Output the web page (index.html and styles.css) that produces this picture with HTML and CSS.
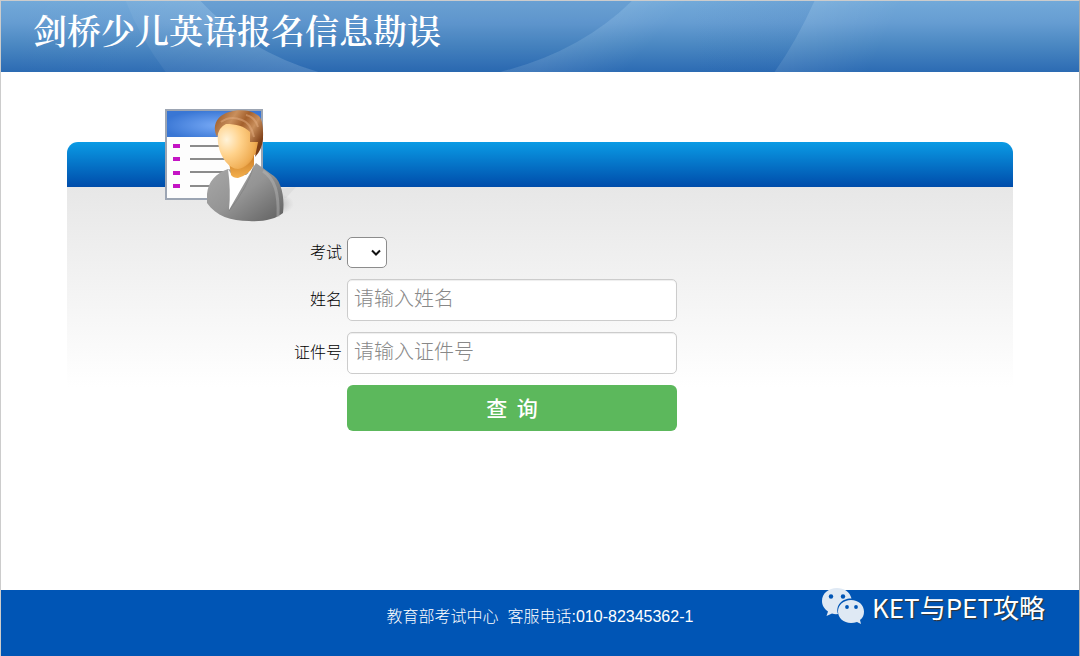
FILE: index.html
```html
<!DOCTYPE html>
<html lang="zh-CN">
<head>
	<meta charset="UTF-8">
	<title>剑桥少儿英语报名信息勘误</title>
	<link rel="stylesheet" href="styles.css">
</head>
<body>
	<div class="header">
		<svg class="wave" viewBox="0 0 1080 71" preserveAspectRatio="none" aria-hidden="true">
			<defs>
				<linearGradient id="w1" x1="0" x2="1"><stop offset="0" stop-color="#fff" stop-opacity="0"/><stop offset="1" stop-color="#fff" stop-opacity=".02"/></linearGradient>
				<linearGradient id="w2" gradientUnits="userSpaceOnUse" x1="125" y1="0" x2="300" y2="0"><stop offset="0" stop-color="#fff" stop-opacity=".06"/><stop offset=".6" stop-color="#fff" stop-opacity=".1"/><stop offset="1" stop-color="#fff" stop-opacity=".13"/></linearGradient>
				<linearGradient id="w3" gradientUnits="userSpaceOnUse" x1="575" y1="25" x2="625" y2="71"><stop offset="0" stop-color="#fff" stop-opacity=".1"/><stop offset="1" stop-color="#fff" stop-opacity="0"/></linearGradient>
				<linearGradient id="w4" gradientUnits="userSpaceOnUse" x1="795" y1="35" x2="870" y2="71"><stop offset="0" stop-color="#fff" stop-opacity=".09"/><stop offset="1" stop-color="#fff" stop-opacity="0"/></linearGradient>
				<linearGradient id="w5" x1="0" x2="1"><stop offset="0" stop-color="#1b4c9c" stop-opacity="0"/><stop offset="1" stop-color="#1b4c9c" stop-opacity=".07"/></linearGradient>
			</defs>
			<path d="M0 0H125Q140 38 165 71H0Z" fill="url(#w1)"/>
			<path d="M125 0H200Q245 49 318 71H165Q140 38 125 0Z" fill="url(#w2)"/>
			<path d="M200 0H632Q580 51 500 71H318Q245 49 200 0Z" fill="#1b4c9c" fill-opacity=".09"/>
			<path d="M632 0H760L700 71H500Q580 51 632 0Z" fill="url(#w3)"/>
			<path d="M690 0H815Q797 40 775 71H690Z" fill="url(#w5)"/>
			<path d="M815 0H960V71H775Q797 40 815 0Z" fill="url(#w4)"/>
		</svg>
		<h1>剑桥少儿英语报名信息勘误</h1>
	</div>
	<div class="main">
		<div class="panel">
			<div class="panel-top"></div>
			<svg class="user-icon" width="132" height="118" viewBox="0 0 132 118" aria-hidden="true">
				<defs>
					<radialGradient id="top" cx=".55" cy=".55" r=".6"><stop offset="0" stop-color="#78aaf6"/><stop offset="1" stop-color="#3976d4"/></radialGradient>
					<radialGradient id="face" cx=".22" cy=".38" r=".85"><stop offset="0" stop-color="#fff3d9"/><stop offset=".4" stop-color="#ffd28b"/><stop offset=".8" stop-color="#f0ae55"/><stop offset="1" stop-color="#d98b30"/></radialGradient>
					<linearGradient id="hair" x1="0" y1="0" x2="1" y2=".6"><stop offset="0" stop-color="#8f4f20"/><stop offset=".35" stop-color="#c98f5c"/><stop offset=".55" stop-color="#a4602c"/><stop offset=".75" stop-color="#c98f5c"/><stop offset="1" stop-color="#7c3d15"/></linearGradient>
					<linearGradient id="coat" x1="0" y1="0" x2="1" y2="1"><stop offset="0" stop-color="#aaa"/><stop offset=".5" stop-color="#949494"/><stop offset="1" stop-color="#5f5f5f"/></linearGradient>
					<linearGradient id="neck" x1="0" y1="0" x2="0" y2="1"><stop offset="0" stop-color="#c47420"/><stop offset="1" stop-color="#f4b04d"/></linearGradient>
					<radialGradient id="shade"><stop offset="0" stop-color="#777" stop-opacity=".7"/><stop offset="1" stop-color="#999" stop-opacity="0"/></radialGradient>
				</defs>
				<ellipse cx="106" cy="99" rx="24" ry="12" fill="url(#shade)"/>
				<path d="M98 86L132 82L122 93L98 95Z" fill="#999" fill-opacity=".12"/>
				<rect x="2" y="5" width="96" height="89" fill="#fdfdfd" stroke="#9ca5b3" stroke-width="2"/>
				<rect x="3" y="6" width="94" height="26" fill="url(#top)"/>
				<g fill="#c414c4"><rect x="9" y="39" width="7" height="4"/><rect x="9" y="52" width="7" height="4"/><rect x="9" y="66" width="7" height="4"/><rect x="9" y="79" width="7" height="4"/></g>
				<path d="M26 41H65M26 54H65M26 67H65M26 81H50" stroke="#8b8b8b" stroke-width="2"/>
				<path d="M64 64C52 68 44 77 43 89V98C52 111 67 116 85 116C99 117 112 114 119 108C121 91 117 74 107 69L92 58L86 68Z" fill="url(#coat)"/>
				<path d="M64 64L68 70H82L88 65L65 105Q67 86 64 64Z" fill="#fff"/>
				<path d="M65 57L90 48V60Q85 70 74 73Q69 73 67 70Z" fill="url(#neck)"/>
				<path d="M90 60Q84 82 65 106" fill="none" stroke="#777" stroke-opacity=".5"/>
				<path d="M99 66C111 74 115 88 114 112" fill="none" stroke="#bbb" stroke-width="3" stroke-opacity=".45"/>
				<path d="M54 28C56 13 80 13 88 26L87 37L94 36C96 42 94 49 90 50C88 57 81 63 74 64C65 64 57 52 55 43Q53 35 54 28Z" fill="url(#face)"/>
				<path d="M53 32C47 20 54 10 65 7C75 4 88 5 95 11C100 17 99 29 99 34Q98 45 91 52L94 37L86 37V27C80 21 72 19 62 19Q55 22 53 32Z" fill="url(#hair)"/>
				<path d="M57 17Q66 10 78 15Q87 18 90 32M82 10Q91 12 94 22" fill="none" stroke="#e3ae82" stroke-width="2" stroke-opacity=".5"/>
			</svg>
			<form class="panel-body">
				<label for="exam">考试</label>
				<div class="select-box">
					<select id="exam"><option></option></select>
					<svg width="12" height="8" viewBox="0 0 12 8" aria-hidden="true"><path d="M2 1.5L6 5.5L10 1.5" fill="none" stroke="#111" stroke-width="2"/></svg>
				</div>
				<label for="name">姓名</label>
				<input type="text" id="name" placeholder="请输入姓名">
				<label for="card">证件号</label>
				<input type="text" id="card" placeholder="请输入证件号">
				<button type="submit">查&nbsp; 询</button>
			</form>
		</div>
	</div>
	<div class="footer">
		<p>教育部考试中心&nbsp; 客服电话:<span>010-82345362-1</span></p>
		<div class="mark">
			<svg width="42" height="37" viewBox="0 0 42 37" aria-hidden="true">
				<path d="M15 0C6.500 0 0 5.500 0 13C0 17.500 2.500 21 6 23.500L4.500 28L10 25.500Q13 26.500 16 26C13 17 21 10 29.500 10.500C28 4 22 0 15 0Z" fill="#dfe9f4"/>
				<path d="M29 12C21.500 12 16 17 16 23.500C16 30 21.500 35 29 35Q32 35 35 34L39 36L38 32C41 30 42 27 42 23.500C42 17 36.500 12 29 12Z" fill="#dfe9f4"/>
				<g fill="#0055b5"><circle cx="9" cy="8.500" r="2.200"/><circle cx="21" cy="8.500" r="2.200"/><circle cx="25" cy="19" r="1.900"/><circle cx="34" cy="19" r="1.900"/></g>
			</svg>
			<span>KET与PET攻略</span>
		</div>
	</div>
</body>
</html>
```
FILE: styles.css
```css
*{
	padding: 0;
	margin: 0;
	box-sizing: border-box;
}
body{
	min-height: 100vh;
	display: flex;
	flex-direction: column;
	background-color: #fff;
	border: 1px solid #ccc;
	border-right-color: #aaa;
	border-bottom: 0;
	font: 300 16px/24px "Liberation Sans", "Noto Sans CJK SC", sans-serif;
	color: #000;
}
.header{
	height: 71px;
	position: relative;
	background: linear-gradient(#72a9d9, #669dd2 30%, #4c89c3 60%, #2c6bb3);
}
.wave{
	position: absolute;
	left: 0;
	top: 0;
	width: 100%;
	height: 100%;
}
.header h1{
	position: relative;
	padding: 5px 32px;
	font: 600 34px/48px "Noto Serif CJK SC", "SimSun", "Noto Sans CJK SC", serif;
	color: #fff;
}
.main{
	flex: 1;
	padding: 70px 66px 0;
}
.panel{
	position: relative;
	max-width: 946px;
	margin: 0 auto;
}
.panel-top{
	height: 45px;
	border-radius: 11px 11px 0 0;
	background: linear-gradient(#0a9be5, #004caa);
}
.user-icon{
	position: absolute;
	left: 97px;
	top: -37px;
}
.panel-body{
	display: grid;
	grid-template-columns: 275px 330px;
	gap: 11px 5px;
	align-items: center;
	padding: 50px 0 0;
	background: linear-gradient(#e7e7e7, #fff 200px);
}
.panel-body label{
	text-align: right;
}
.select-box{
	position: relative;
	width: 40px;
	height: 31px;
}
.select-box select{
	width: 100%;
	height: 100%;
	appearance: none;
	background-color: #fff;
	border: 1px solid #8c8c8c;
	border-radius: 5px;
}
.select-box svg{
	position: absolute;
	right: 5px;
	top: 12px;
	pointer-events: none;
}
.panel-body input{
	width: 100%;
	height: 42px;
	padding: 0 6px 2px;
	background-color: #fff;
	border: 1px solid #ccc;
	border-radius: 5px;
	box-shadow: inset 0 1px 1px rgba(0,0,0,.07);
	font: inherit;
	font-size: 20px;
}
.panel-body input::placeholder{
	color: #888;
}
.panel-body button{
	grid-column: 2;
	height: 46px;
	padding-bottom: 2px;
	border: 0;
	border-radius: 6px;
	background-color: #5cb85c;
	color: #fff;
	font: 500 21px/30px "Noto Sans CJK SC", sans-serif;
}
.footer{
	position: relative;
	height: 66px;
	padding-top: 15px;
	background-color: #0055b5;
	color: #fff;
	text-align: center;
}
.footer p span{
	font-weight: 400;
}
.mark{
	position: absolute;
	right: 34px;
	top: -2px;
	display: flex;
	align-items: center;
	gap: 8px;
	font: 400 26px/37px "Noto Sans CJK SC", sans-serif;
	text-shadow: 1px 1px 1px #333;
}
```
